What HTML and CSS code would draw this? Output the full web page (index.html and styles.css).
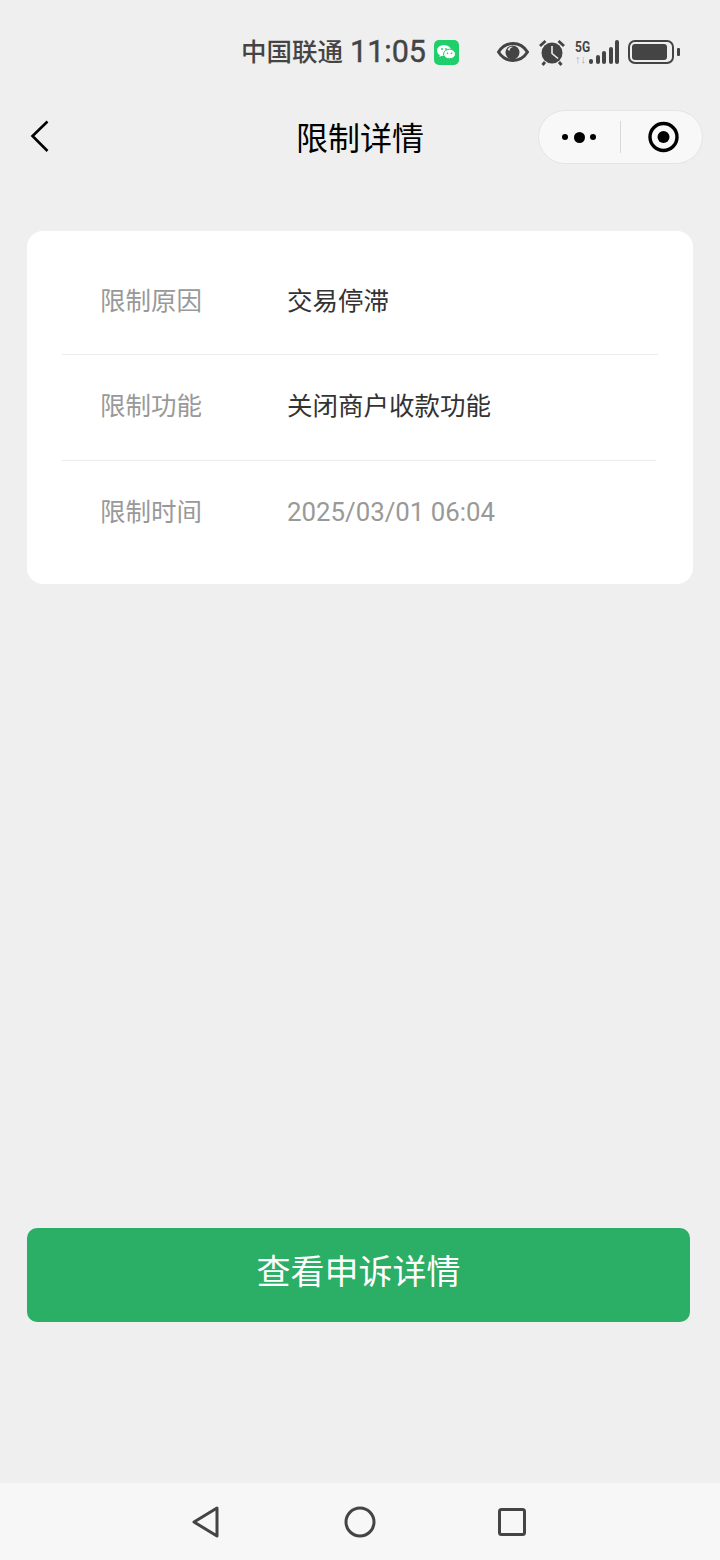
FILE: index.html
```html
<!DOCTYPE html>
<html lang="zh-CN">
<head>
    <meta charset="UTF-8">
    <meta name="viewport" content="width=device-width, initial-scale=1.0">
    <title>限制详情</title>
    <link rel="stylesheet" href="styles.css">
</head>
<body>
    <div class="status_bar">
        <span class="carrier">中国联通</span>
        <span class="clock">11:05</span>
        <svg class="wechat_badge" width="25" height="25" viewBox="0 0 25 25">
            <rect width="25" height="25" rx="5" fill="#1fcf6c"/>
            <ellipse cx="10" cy="10.500" rx="7" ry="5.600" fill="#fff"/>
            <path d="M6 14l-.6 3 3-1.600z" fill="#fff"/>
            <ellipse cx="15.500" cy="14" rx="6" ry="4.800" fill="#fff" stroke="#1fcf6c" stroke-width="1"/>
            <circle cx="13.500" cy="13.400" r=".8" fill="#1fcf6c"/>
            <circle cx="17.500" cy="13.400" r=".8" fill="#1fcf6c"/>
            <circle cx="8" cy="9" r=".9" fill="#1fcf6c"/>
            <circle cx="12" cy="9" r=".9" fill="#1fcf6c"/>
        </svg>
        <div class="status_icons">
            <svg width="32" height="24" viewBox="0 0 32 24">
                <path d="M1.500 12C5 6.500 10 3.500 16 3.500S27 6.500 30.500 12C27 17.500 22 20.500 16 20.500S5 17.500 1.500 12z" fill="none" stroke="#444" stroke-width="3"/>
                <circle cx="15.500" cy="12.500" r="7" fill="#444"/>
                <path d="M10.500 9.500C11.500 7.500 14 6.500 16 7c-2 .5-3.500 1.500-3.500 4z" fill="#efefef"/>
            </svg>
            <svg width="28" height="28" viewBox="0 0 28 28">
                <circle cx="14" cy="15" r="10.500" fill="#444"/>
                <path d="M14 8v7.500l6 5" fill="none" stroke="#efefef" stroke-width="1.600"/>
                <path d="M2 8l5.500-5M26 8l-5.500-5M7 24l-2.500 3M21 24l2.500 3" stroke="#444" stroke-width="2.800" fill="none"/>
            </svg>
            <div class="signal">
                <div class="net_stack">
                    <span class="net_type">5G</span>
                    <span class="net_arrows">↑↓</span>
                </div>
                <div class="bars">
                    <i class="bar bar1"></i>
                    <i class="bar bar2"></i>
                    <i class="bar bar3"></i>
                    <i class="bar bar4"></i>
                    <i class="bar bar5"></i>
                </div>
            </div>
            <div class="battery">
                <div class="battery_body"><div class="battery_fill"></div></div>
                <div class="battery_cap"></div>
            </div>
        </div>
    </div>

    <div class="nav_bar">
        <svg class="back_icon" width="22" height="34" viewBox="0 0 22 34">
            <path d="M18.500 2.500L3.500 17l15 15" fill="none" stroke="#000" stroke-width="2.600"/>
        </svg>
        <h1 class="nav_title">限制详情</h1>
        <div class="capsule">
            <div class="capsule_dots">
                <i class="dot"></i>
                <i class="dot dot_big"></i>
                <i class="dot"></i>
            </div>
            <div class="capsule_line"></div>
            <svg width="32" height="32" viewBox="0 0 32 32">
                <circle cx="15.500" cy="16" r="13.500" fill="none" stroke="#000" stroke-width="3.400"/>
                <circle cx="15.500" cy="16" r="6" fill="#000"/>
            </svg>
        </div>
    </div>

    <div class="main">
        <div class="card">
            <div class="row">
                <span class="row_label">限制原因</span>
                <span class="row_value">交易停滞</span>
            </div>
            <div class="row row_func">
                <span class="row_label">限制功能</span>
                <span class="row_value">关闭商户收款功能</span>
            </div>
            <div class="row row_time">
                <span class="row_label">限制时间</span>
                <span class="row_value row_value_muted">2025/03/01 06:04</span>
            </div>
        </div>
        <button class="appeal_button" type="button">查看申诉详情</button>
    </div>

    <div class="bottom_bar">
        <svg width="30" height="34" viewBox="0 0 30 34">
            <path d="M26 3L3 17l23 14z" fill="none" stroke="#444" stroke-width="3" stroke-linejoin="round"/>
        </svg>
        <svg width="32" height="32" viewBox="0 0 32 32">
            <circle cx="16" cy="16" r="14" fill="none" stroke="#444" stroke-width="3"/>
        </svg>
        <svg class="square_icon" width="30" height="30" viewBox="0 0 30 30">
            <rect x="2.500" y="2.500" width="25" height="25" rx="2" fill="none" stroke="#444" stroke-width="3"/>
        </svg>
    </div>
</body>
</html>
```

FILE: styles.css
```css
body {
    font-family: "Noto Sans CJK SC", Roboto, sans-serif;
    margin: 0;
    height: 1560px;
    display: flex;
    flex-direction: column;
    background-color: #efefef;
    color: #333;
    overflow: hidden;
}

.status_bar {
    height: 104px;
    box-sizing: border-box;
    padding-left: 241px;
    display: flex;
    align-items: center;
    color: #444;
}
.carrier {
    font-size: 25.500px;
    font-weight: 500;
    line-height: 30px;
    width: 109px;
    margin-top: -4px;
    white-space: nowrap;
}
.clock {
    font-family: Roboto, sans-serif;
    font-size: 30.500px;
    line-height: 30px;
    width: 84px;
    -webkit-text-stroke: .4px #444;
    white-space: nowrap;
}
.status_icons {
    margin-left: 38px;
    display: flex;
    align-items: center;
}
.status_icons svg {
    display: block;
}
.status_icons svg + svg {
    margin-left: 9px;
}
.signal {
    margin-left: 9px;
    display: flex;
    align-items: flex-end;
    height: 24px;
}
.net_stack {
    display: flex;
    flex-direction: column;
    width: 14px;
    font-family: Roboto, sans-serif;
}
.net_type {
    font-size: 15px;
    font-weight: 700;
    line-height: 15px;
    transform: scaleX(.8);
    transform-origin: left;
}
.net_arrows {
    font-size: 11px;
    font-weight: 700;
    line-height: 9px;
    color: #aaa;
    white-space: nowrap;
}
.bars {
    display: flex;
    align-items: flex-end;
    gap: 2.500px;
    height: 24px;
}
.bar {
    display: block;
    width: 4px;
    background: #444;
    border-radius: 2px;
}
.bar1 { height: 5px; }
.bar2 { height: 9px; }
.bar3 { height: 13px; }
.bar4 { height: 17px; }
.bar5 { height: 24px; }
.battery {
    margin-left: 9px;
    display: flex;
    align-items: center;
}
.battery_body {
    width: 46px;
    height: 24px;
    box-sizing: border-box;
    border: 2px solid #444;
    border-radius: 7px;
    padding: 2px 5px 2px 2px;
}
.battery_fill {
    height: 100%;
    background: #444;
    border-radius: 3px;
}
.battery_cap {
    width: 3px;
    height: 8px;
    margin-left: 3px;
    background: #444;
    border-radius: 1px;
}

.nav_bar {
    height: 68px;
    position: relative;
    display: flex;
    align-items: center;
    justify-content: center;
}
.back_icon {
    position: absolute;
    left: 29px;
    top: 15px;
}
.nav_title {
    margin: 0 0 4px;
    font-size: 32px;
    font-weight: 400;
    color: #000;
}
.capsule {
    position: absolute;
    left: 538px;
    top: 6px;
    width: 165px;
    height: 54px;
    box-sizing: border-box;
    display: flex;
    align-items: center;
    background: #f8f8f8;
    border: 1px solid #e4e4e4;
    border-radius: 27px;
}
.capsule_dots {
    margin-left: 23px;
    width: 34px;
    display: flex;
    align-items: center;
    justify-content: space-between;
}
.dot {
    display: block;
    width: 6px;
    height: 6px;
    background: #000;
    border-radius: 50%;
}
.dot_big {
    width: 11px;
    height: 11px;
}
.capsule_line {
    width: 1px;
    height: 32px;
    margin: 0 27px 0 24px;
    background: #d8d8d8;
}
.capsule svg {
    display: block;
}

.main {
    flex: 1;
    padding: 59px 27px 0;
    display: flex;
    flex-direction: column;
}
.card {
    width: 666px;
    height: 353px;
    box-sizing: border-box;
    padding: 18px 35px 0;
    background: #fff;
    border-radius: 16px;
}
.row {
    height: 106px;
    box-sizing: border-box;
    padding-left: 38px;
    padding-bottom: 7px;
    display: flex;
    align-items: center;
    font-size: 25.500px;
    border-bottom: 1px solid #ececec;
}
.row_func {
    margin-right: 2px;
    padding-bottom: 9px;
}
.row_time {
    border-bottom: none;
    padding-bottom: 9px;
}
.row_label {
    width: 187px;
    color: #999;
}
.row_value {
    color: #333;
}
.row_value_muted {
    color: #999;
    font-family: Roboto, sans-serif;
    font-size: 25.800px;
    margin-top: 5px;
}
.appeal_button {
    width: 663px;
    height: 94px;
    margin-top: 644px;
    padding: 0 0 12px;
    font-family: inherit;
    font-size: 34px;
    color: #fff;
    background-color: #2bae66;
    border: none;
    border-radius: 10px;
    cursor: pointer;
}

.bottom_bar {
    height: 77px;
    flex-shrink: 0;
    display: flex;
    align-items: center;
    justify-content: center;
    gap: 123px;
    background: #f7f7f7;
}
.square_icon {
    margin-left: -2px;
    margin-right: 2px;
}
```
